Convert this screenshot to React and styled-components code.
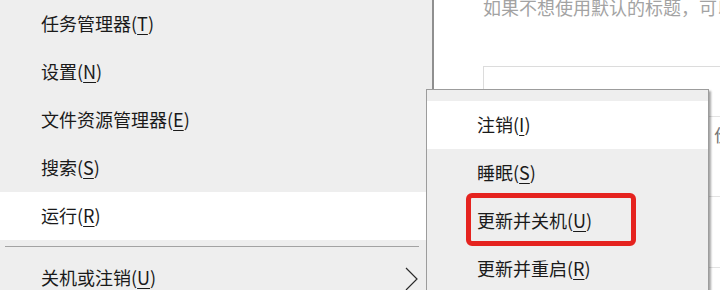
import React from "react";
import styled, { createGlobalStyle } from "styled-components";

const Global = createGlobalStyle`
  html, body { margin: 0; padding: 0; background: #ffffff; overflow: hidden; }
  * { box-sizing: border-box; }
`;

const Screen = styled.div`
  position: relative;
  width: 720px;
  height: 290px;
  overflow: hidden;
  display: flex;
  background: #ffffff;
  font-family: "Noto Sans CJK SC", "Noto Sans", sans-serif;
  font-size: 18px;
  color: #1a1a1a;
`;

const StartMenu = styled.div`
  width: 434px;
  flex: none;
  background: #eeeeee;
  border-right: 2px solid #8f8f8f;
  display: flex;
  flex-direction: column;
`;

const MenuRow = styled.div`
  height: 48px;
  flex: none;
  display: flex;
  align-items: center;
  justify-content: space-between;
  padding: 0 14px 0 ${(p) => p.$indent || 41}px;
  background: ${(p) => (p.$active ? "#ffffff" : "transparent")};
  position: relative;
  white-space: nowrap;
`;

const Label = styled.span`
  line-height: 1;
  padding-bottom: 2px;
`;

const U = styled.u`
  text-decoration: underline;
  text-decoration-thickness: 1px;
  text-underline-offset: 3px;
`;

const Separator = styled.div`
  height: 1px;
  flex: none;
  background: #a3a3a3;
  margin: 6px 13px 7px 5px;
`;

const Chevron = styled.svg`
  width: 13px;
  height: 24px;
  margin-top: 2px;
`;

const Content = styled.div`
  flex: 1;
  padding-left: 49px;
  display: flex;
  flex-direction: column;
  overflow: hidden;
`;

const Hint = styled.div`
  margin-top: -6px;
  color: #a3a3a3;
  white-space: nowrap;
  line-height: 26px;
  height: 26px;
`;

const Box = styled.div`
  margin-top: 46px;
  border-top: 1px solid #dcdcdc;
  border-left: 1px solid #dcdcdc;
  display: flex;
  flex-direction: column;
`;

const BoxRow = styled.div`
  height: ${(p) => p.$h}px;
  flex: none;
  border-bottom: 1px solid #e3e3e3;
  display: flex;
  align-items: flex-start;
  justify-content: flex-end;
  padding-top: 5px;
  color: #777;
  font-size: 18px;
  white-space: nowrap;
  overflow: hidden;
`;

const Peek = styled.span`
  margin-right: -12px;
  line-height: 24px;
`;

const Flyout = styled.div`
  position: absolute;
  left: 426px;
  top: 89px;
  width: 283px;
  height: 230px;
  background: #eeeeee;
  border: 1px solid #9c9c9c;
  box-shadow: 2px 2px 2px rgba(0, 0, 0, 0.35);
  padding-top: 11px;
  display: flex;
  flex-direction: column;
`;

const Mark = styled.div`
  position: absolute;
  left: 39px;
  top: -4px;
  width: 170px;
  height: 53px;
  border: 5px solid #e5231f;
  border-radius: 6px;
  pointer-events: none;
`;

const mainItems = [
  ["任务管理器", "T"],
  ["设置", "N"],
  ["文件资源管理器", "E"],
  ["搜索", "S"],
  ["运行", "R", true],
];

const subItems = [
  ["注销", "I", true],
  ["睡眠", "S"],
  ["更新并关机", "U", false, true],
  ["更新并重启", "R"],
];

export default function App() {
  return (
    <>
      <Global />
      <Screen>
        <StartMenu>
          {mainItems.map(([t, k, a]) => (
            <MenuRow key={t} $active={a}>
              <Label>
                {t}(<U>{k}</U>)
              </Label>
            </MenuRow>
          ))}
          <Separator />
          <MenuRow>
            <Label>
              关机或注销(<U>U</U>)
            </Label>
            <Chevron viewBox="0 0 13 24">
              <polyline points="1,1 12,12 1,23" fill="none" stroke="#2a2a2a" strokeWidth="1.2" />
            </Chevron>
          </MenuRow>
        </StartMenu>
        <Content>
          <Hint>如果不想使用默认的标题，可以在这里输入</Hint>
          <Box>
            <BoxRow $h={50} />
            <BoxRow $h={80}>
              <Peek>价</Peek>
            </BoxRow>
            <BoxRow $h={71} />
            <BoxRow $h={60} />
          </Box>
        </Content>
        <Flyout>
          {subItems.map(([t, k, a, m]) => (
            <MenuRow key={t} $active={a} $indent={50}>
              <Label>
                {t}(<U>{k}</U>)
              </Label>
              {m && <Mark />}
            </MenuRow>
          ))}
        </Flyout>
      </Screen>
    </>
  );
}
